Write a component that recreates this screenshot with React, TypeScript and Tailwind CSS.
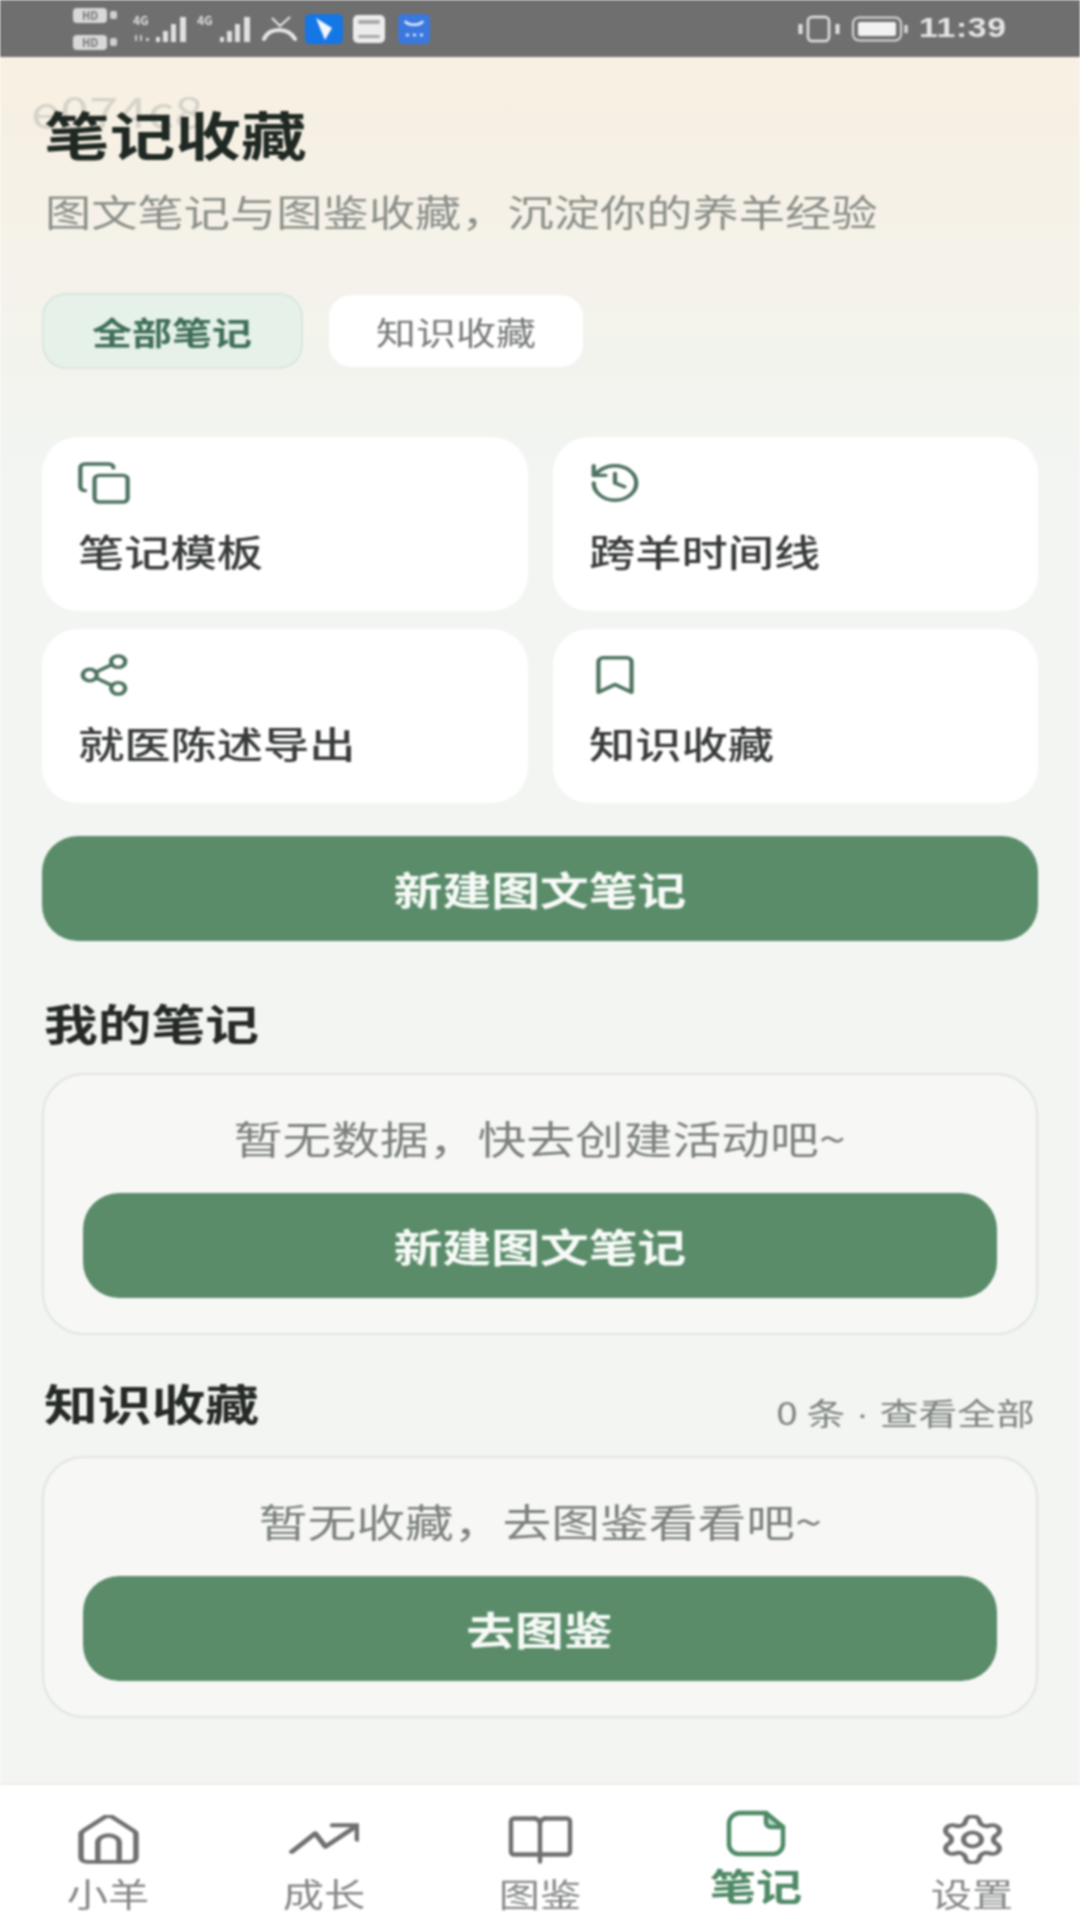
import { Copy, History, Share2, Bookmark, Settings } from "lucide-react";
import type { ReactNode } from "react";

const T = ({ children, o = "origin-left" }: { children: ReactNode; o?: string }) => (
  <span className={`inline-block scale-x-[1.25] ${o}`}>{children}</span>
);
const C = ({ children }: { children: ReactNode }) => (
  <span className="inline-block scale-x-[1.25] origin-center">{children}</span>
);

const GreenButton = ({ label }: { label: string }) => (
  <div className="flex h-[105px] items-center justify-center rounded-[36px] bg-[#5a8c6a] text-[39px] font-bold text-[#f7faf7]">
    <C>{label}</C>
  </div>
);

const QuickCard = ({ icon, label }: { icon: ReactNode; label: string }) => (
  <div className="h-[174px] rounded-[36px] bg-white pl-[36px] pt-[25px]">
    <div className="h-[42px] text-[#4d7360]">{icon}</div>
    <div className="mt-[22px] text-[37px] font-medium leading-[50px] text-[#383c39]">
      <T>{label}</T>
    </div>
  </div>
);

const EmptyCard = ({ text, label }: { text: string; label: string }) => (
  <div className="mt-[23px] h-[262px] rounded-[42px] border-2 border-[#e0e4e0] bg-[#f7f8f6] px-[39px] pt-[36px]">
    <div className="text-center text-[39px] leading-[52px] text-[#7c817d]">
      <C>{text}</C>
    </div>
    <div className="mt-[30px]">
      <GreenButton label={label} />
    </div>
  </div>
);

const NavItem = ({ icon, label, active }: { icon: ReactNode; label: string; active?: boolean }) => (
  <div className={`flex flex-col items-center ${active ? "pt-[25px] text-[#4f8a66]" : "pt-[30px] text-[#6f716f]"}`}>
    <div className={active ? "h-[47px]" : "h-[49px]"}>{icon}</div>
    <div
      className={
        active
          ? "mt-[6px] text-[37px] font-bold leading-[44px]"
          : "mt-[9px] text-[33px] leading-[40px] text-[#858886]"
      }
    >
      <C>{label}</C>
    </div>
  </div>
);

const HdBadge = () => (
  <div className="flex items-center gap-[3px]">
    <span className="flex h-[15px] w-[34px] items-center justify-center rounded-[4px] bg-[#d8d8d8] text-[11px] font-bold leading-none text-[#777777]">
      HD
    </span>
    <span className="h-[8px] w-[7px] rounded-[2px] bg-[#cfcfcf]" />
  </div>
);

const Signal = ({ tag, arrows }: { tag: string; arrows?: boolean }) => (
  <div className="relative h-[28px] w-[54px]">
    <span className="absolute left-0 top-[-2px] text-[12px] font-bold leading-[14px] text-[#dedede]">{tag}</span>
    <svg viewBox="0 0 54 28" className="absolute inset-0 h-[28px] w-[54px]" fill="#dfdfdf">
      {arrows && <path d="M2 26v-6h2v6zM7 20v6h2v-6zM13 23h3v3h-3z" opacity="0.85" />}
      <rect x="23" y="22" width="4" height="5" />
      <rect x="30" y="16" width="5" height="11" />
      <rect x="38" y="9" width="5" height="18" />
      <rect x="47" y="2" width="6" height="25" />
    </svg>
  </div>
);

const StatusBar = () => (
  <div className="flex h-[57px] items-center justify-between bg-[#6f6f6f] pl-[73px] pr-[75px]">
    <div className="flex items-center">
      <div className="flex flex-col gap-[12px]">
        <HdBadge />
        <HdBadge />
      </div>
      <div className="ml-[16px]">
        <Signal tag="4G" arrows />
      </div>
      <div className="ml-[10px]">
        <Signal tag="4G" />
      </div>
      <svg viewBox="0 0 35 28" className="ml-[11px] h-[28px] w-[35px]" fill="none" stroke="#e6e6e6">
        <path d="M2 24c3-7 9-9 15-9s12 2 16 9" strokeWidth="4" strokeLinecap="round" />
        <path d="M10 3l8 8 10-9" strokeWidth="2" />
      </svg>
      <div className="ml-[8px] flex h-[30px] w-[38px] items-center justify-center rounded-[5px] bg-[#1576e6]">
        <svg viewBox="0 0 38 30" className="h-[30px] w-[38px]" fill="#f2f7fd">
          <path d="M11 4l16 10-7 12-5-12z" />
        </svg>
      </div>
      <div className="ml-[10px] flex h-[28px] w-[32px] flex-col justify-between rounded-[5px] bg-[#ececec] px-[5px] py-[5px]">
        <span className="h-[4px] rounded-[2px] bg-[#a9a9a9]" />
        <span className="h-[3px] rounded-[2px] bg-[#a9a9a9]" />
      </div>
      <div className="ml-[13px] flex h-[30px] w-[32px] items-center justify-center rounded-[5px] bg-[#3b78de]">
        <svg viewBox="0 0 32 30" className="h-[30px] w-[32px]" fill="none" stroke="#dfe9fb" strokeWidth="2.5">
          <path d="M7 7c3 5 15 5 18 0" />
          <path d="M8 21h3M15 21h3M22 21h3" />
        </svg>
      </div>
    </div>
    <div className="flex items-center">
      <svg viewBox="0 0 42 28" className="h-[28px] w-[42px]" fill="none" stroke="#e2e2e2" strokeWidth="2.5">
        <rect x="10" y="2" width="21" height="24" rx="4" />
        <path d="M2.500 9v10M39.500 9v10" strokeWidth="4" />
      </svg>
      <svg viewBox="0 0 56 26" className="ml-[12px] h-[26px] w-[56px]" fill="none" stroke="#d9d9d9" strokeWidth="2">
        <rect x="1" y="1.500" width="48" height="23" rx="6" />
        <rect x="6" y="6" width="38" height="14" rx="2" fill="#f2f2f2" stroke="none" />
        <path d="M54 9v8" strokeWidth="3.500" />
      </svg>
      <span className="ml-[11px] w-[86px] font-['Liberation_Sans',sans-serif] text-[27px] font-bold leading-none tracking-[0.5px] text-[#e4e4e4]">
        <T>11:39</T>
      </span>
    </div>
  </div>
);

const iconCls = "h-[42px] w-[52px]";

export default function App() {
  return (
    <div className="relative flex h-[1920px] w-[1080px] flex-col overflow-hidden bg-[#f2f5f2] font-['Noto_Sans_CJK_SC','Liberation_Sans',sans-serif] blur-[0.8px]">
      <StatusBar />
      <main className="relative flex-1 bg-gradient-to-b from-[#f7f0e3] from-[2%] to-[#f2f5f2] to-[24%] px-[42px]">
        <div className="absolute left-[31px] top-[29px] text-[42px] leading-[48px] text-[#d6d3ca]">
          <T>e074c8</T>
        </div>
        <h1 className="relative pl-[2px] pt-[46px] text-[52.5px] font-bold leading-[60px] text-[#1f2823]">
          <T>笔记收藏</T>
        </h1>
        <p className="mt-[26px] pl-[3px] text-[37px] leading-[44px] text-[#8b8f89]">
          <T>图文笔记与图鉴收藏，沉淀你的养羊经验</T>
        </p>
        <div className="mt-[60px] flex gap-[24px]">
          <div className="flex h-[76px] w-[261px] items-center justify-center rounded-[24px] border-2 border-[#d9e6dd] bg-[#e6f1ea] text-[32px] font-bold text-[#3f6f57]">
            <C>全部笔记</C>
          </div>
          <div className="flex h-[76px] w-[258px] items-center justify-center rounded-[24px] border-2 border-[#f1f1ee] bg-white text-[32px] text-[#777b78]">
            <C>知识收藏</C>
          </div>
        </div>
        <div className="mt-[68px] grid grid-cols-2 gap-x-[25px] gap-y-[18px]">
          <QuickCard label="笔记模板" icon={<Copy preserveAspectRatio="none" viewBox="1 1 22 22" className={iconCls} strokeWidth={1.8} />} />
          <QuickCard label="跨羊时间线" icon={<History preserveAspectRatio="none" viewBox="1 1 22 22" className={iconCls} strokeWidth={1.8} />} />
          <QuickCard label="就医陈述导出" icon={<Share2 preserveAspectRatio="none" viewBox="1 1 22 22" className={iconCls} strokeWidth={1.8} />} />
          <QuickCard label="知识收藏" icon={<Bookmark preserveAspectRatio="none" viewBox="1 1 22 22" className={iconCls} strokeWidth={1.8} />} />
        </div>
        <div className="mt-[33px]">
          <GreenButton label="新建图文笔记" />
        </div>
        <h2 className="mt-[53px] pl-[2px] text-[43px] font-bold leading-[56px] text-[#262a27]">
          <T>我的笔记</T>
        </h2>
        <EmptyCard text="暂无数据，快去创建活动吧~" label="新建图文笔记" />
        <div className="mt-[39px] flex h-[59px] justify-between pl-[2px] pr-[3px]">
          <h2 className="text-[43px] font-bold leading-[56px] text-[#262a27]">
            <T>知识收藏</T>
          </h2>
          <span className="self-end text-[31px] leading-[36px] text-[#7f8480]">
            <T o="origin-right">
              0 条<span className="font-['Liberation_Sans',sans-serif]"> · </span>查看全部
            </T>
          </span>
        </div>
        <EmptyCard text="暂无收藏，去图鉴看看吧~" label="去图鉴" />
      </main>
      <nav className="grid h-[137px] grid-cols-5 border-t-2 border-[#eceeeb] bg-white">
        <NavItem
          label="小羊"
          icon={
            <svg viewBox="2 1 20 23" preserveAspectRatio="none" className="h-full w-[61px]" fill="none" stroke="currentColor" strokeWidth="1.800" strokeLinecap="round" strokeLinejoin="round">
              <path d="M3 10a2 2 0 0 1 .709-1.528l7-6.500a2 2 0 0 1 2.582 0l7 6.500A2 2 0 0 1 21 10v11a2 2 0 0 1-2 2H5a2 2 0 0 1-2-2z" />
              <path d="M15.500 23v-9a3.500 3.500 0 0 0-7 0v9" />
            </svg>
          }
        />
        <NavItem
          label="成长"
          icon={
            <svg viewBox="0 0 24 24" preserveAspectRatio="none" className="h-full w-[70px]" fill="none" stroke="currentColor" strokeWidth="2" strokeLinecap="round" strokeLinejoin="round">
              <path d="M1 18l8-9 3.500 6.500L23 5.500" />
              <path d="M15 5h8.500v7" />
            </svg>
          }
        />
        <NavItem
          label="图鉴"
          icon={
            <svg viewBox="0 0 65 48" className="h-full w-[65px]" fill="none" stroke="currentColor" strokeWidth="4.500" strokeLinecap="round" strokeLinejoin="round">
              <path d="M27 3H6a3 3 0 0 0-3 3v30a3 3 0 0 0 3 3h53a3 3 0 0 0 3-3V6a3 3 0 0 0-3-3H37" />
              <path d="M27 3q5 1 5 6v37M37 3q-5 1-5 6" />
            </svg>
          }
        />
        <NavItem
          active
          label="笔记"
          icon={
            <svg viewBox="0 0 60 47" className="h-full w-[60px]" fill="none" stroke="currentColor" strokeWidth="4.500" strokeLinecap="round" strokeLinejoin="round">
              <path d="M40 3v9a5 5 0 0 0 5 5h12z" fill="#bfe0cd" stroke="none" />
              <path d="M14 3h26l17 14v17a10 10 0 0 1-10 10H13A10 10 0 0 1 3 34V14A11 11 0 0 1 14 3z" />
              <path d="M40 3v9a5 5 0 0 0 5 5h12" />
            </svg>
          }
        />
        <NavItem
          label="设置"
          icon={<Settings preserveAspectRatio="none" viewBox="1.500 1.500 21 21" className="h-full w-[63px]" strokeWidth={1.7} />}
        />
      </nav>
    </div>
  );
}
